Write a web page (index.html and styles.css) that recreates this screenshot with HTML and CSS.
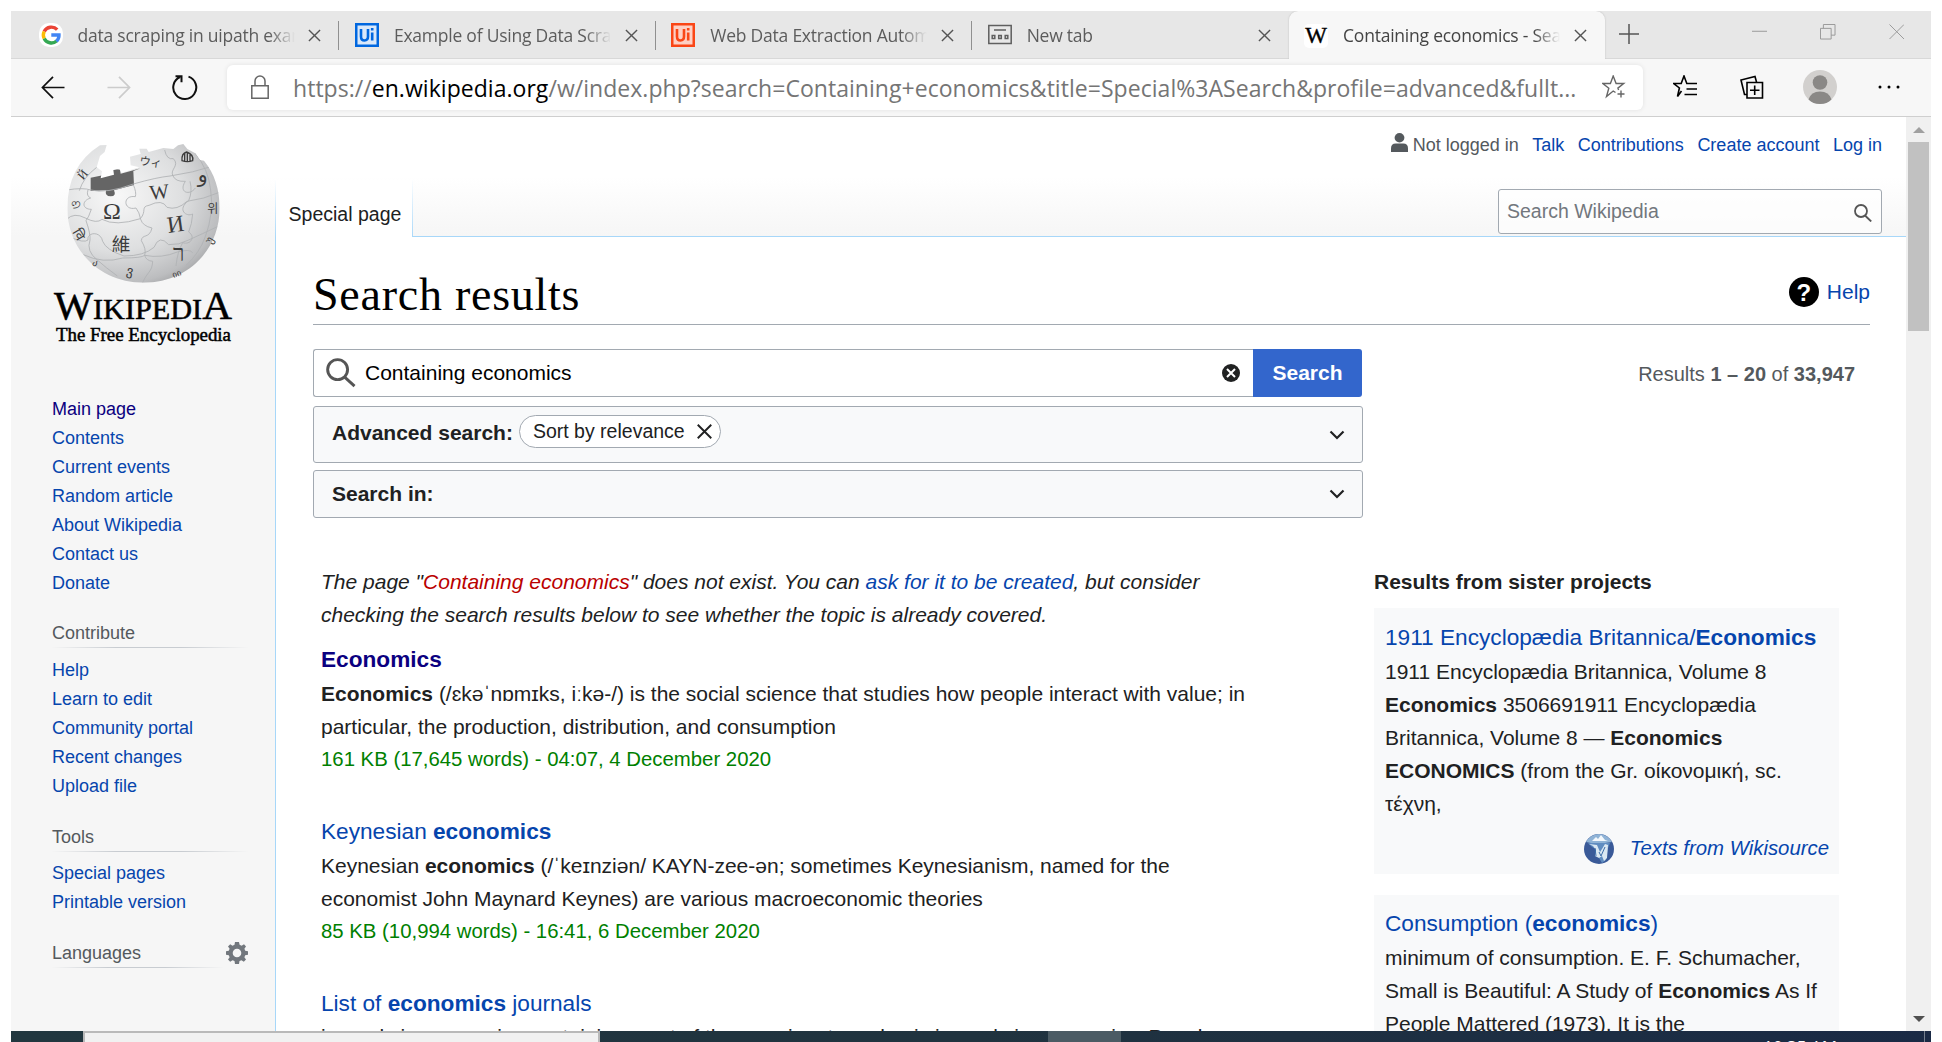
FILE: index.html
```html
<!DOCTYPE html>
<html lang="en">
<head>
<meta charset="utf-8">
<title>Containing economics - Search results - Wikipedia</title>
<link rel="stylesheet" href="styles.css">
</head>
<body>
<div class="window">
  <div class="tabstrip">
    <div class="tab">
      <svg class="fav" viewBox="0 0 24 24"><rect width="24" height="24" rx="10" fill="#fff"/><g fill="none" stroke-width="3.4"><path d="M18.2 6.6A8 8 0 0 0 5.2 8.6" stroke="#ea4335"/><path d="M5.2 8.4a8 8 0 0 0 0 7.2" stroke="#fbbc05"/><path d="M5.2 15.4a8 8 0 0 0 12.4 2.6" stroke="#34a853"/><path d="M12.3 12H20a8 8 0 0 1-2.6 6.2" stroke="#4285f4"/></g></svg>
      <span class="tab-title">data scraping in uipath exam</span>
      <svg class="x" viewBox="0 0 14 14"><path d="M1 1l12 12M13 1L1 13"/></svg>
    </div>
    <div class="tab">
      <svg class="fav" viewBox="0 0 24 24"><rect width="24" height="24" fill="#0067df"/><rect x="2.5" y="2.5" width="19" height="19" fill="#fff" opacity=".85"/><path d="M6 6v7.500q0 4 3.500 4t3.500-4V6M17.200 9.500v8M17.200 5v2.500" fill="none" stroke="#0067df" stroke-width="2.600"/></svg>
      <span class="tab-title">Example of Using Data Scra</span>
      <svg class="x" viewBox="0 0 14 14"><path d="M1 1l12 12M13 1L1 13"/></svg>
    </div>
    <div class="tab">
      <svg class="fav" viewBox="0 0 24 24"><rect width="24" height="24" fill="#fa4616"/><rect x="2.5" y="2.5" width="19" height="19" fill="#fff" opacity=".75"/><path d="M6 6v7.500q0 4 3.500 4t3.500-4V6M17.200 9.500v8M17.200 5v2.500" fill="none" stroke="#fa4616" stroke-width="2.600"/></svg>
      <span class="tab-title">Web Data Extraction Autom</span>
      <svg class="x" viewBox="0 0 14 14"><path d="M1 1l12 12M13 1L1 13"/></svg>
    </div>
    <div class="tab last">
      <svg class="fav" viewBox="0 0 24 24" fill="none" stroke="#5f5f5f" stroke-width="1.5"><path d="M.8 2.500h22.400v18H.8zM6 7h12" /><path d="M4.200 12.500h2.600v3H4.200zM10.700 12.500h2.600v3h-2.600zM17.200 12.500h2.600v3h-2.600z"/></svg>
      <span class="tab-title">New tab</span>
      <svg class="x" viewBox="0 0 14 14"><path d="M1 1l12 12M13 1L1 13"/></svg>
    </div>
    <div class="tab active">
      <span class="fav wfav">W</span>
      <span class="tab-title">Containing economics - Sea</span>
      <svg class="x" viewBox="0 0 14 14"><path d="M1 1l12 12M13 1L1 13"/></svg>
    </div>
    <svg class="plus" viewBox="0 0 20 20"><path d="M10 0v20M0 10h20"/></svg>
    <div class="win-buttons">
      <svg viewBox="0 0 16 16"><path d="M0 7.500h16"/></svg>
      <svg viewBox="0 0 16 16"><path d="M.5 4.500h11v11H.5zM3.500 4.500v-4h12v11h-4"/></svg>
      <svg viewBox="0 0 16 16"><path d="M.5.5l15 15M15.500.5l-15 15"/></svg>
    </div>
  </div>

  <div class="toolbar">
    <svg class="nav" viewBox="0 0 24 24"><path d="M24 12H1M12 1L1 12l11 11"/></svg>
    <svg class="nav off" viewBox="0 0 24 24"><path d="M0 12h23M12 1l11 11-11 11"/></svg>
    <svg class="nav reload" viewBox="0 0 26 26"><path d="M16.500 2.600A11.500 11.500 0 1 1 8 3M3.500 2.200h6v6"/></svg>
    <div class="address">
      <svg class="lock" viewBox="0 0 18 24"><path d="M.8 10.800h16.400v12.400H.8zM4 10.500V6a5 5 0 0 1 10 0v4.500"/></svg>
      <span class="url">https://<b>en.wikipedia.org</b>/w/index.php?search=Containing+economics&amp;title=Special%3ASearch&amp;profile=advanced&amp;fullt...</span>
      <svg class="star" viewBox="0 0 24 24"><path d="M13.500 17.500L11.200 16 4.500 21.500l2.300-8.300L.8 8.500h7.600L11.200 1l2.900 7.500h7.600l-5.800 4.600.7 2M19 15.500v7M15.500 19h7"/></svg>
    </div>
    <svg class="tool" viewBox="0 0 24 24"><path d="M8.500 16L4.500 21.500l1.900-8.500L.8 8.500h7.400L11 1l2.800 7.500H24M13.500 14H24M11.500 19.500H24" /></svg>
    <svg class="tool coll" viewBox="0 0 24 24"><path d="M7 7.500h15.500V23H7zM14.700 10.500v9.500M10 15.200h9.500M7 19.500H4.500L1 5l14-3.500 1.500 5.500"/></svg>
    <svg class="avatar" viewBox="0 0 34 34"><circle cx="17" cy="17" r="17" fill="#d2d0ce"/><circle cx="17" cy="12.500" r="7.300" fill="#8a8886"/><path d="M5.500 29.500Q8 21.500 17 21.500t11.500 8Q24 34 17 34T5.500 29.500z" fill="#8a8886"/></svg>
    <svg class="dots" viewBox="0 0 22 4"><circle cx="2" cy="2" r="1.500"/><circle cx="11" cy="2" r="1.500"/><circle cx="20" cy="2" r="1.500"/></svg>
  </div>

  <div class="viewport">
    <aside class="sidebar">
      <svg class="logo" viewBox="0 0 570 660">
        <defs>
          <radialGradient id="globe" cx=".35" cy=".42" r=".7"><stop offset="0" stop-color="#f8f8f8"/><stop offset=".5" stop-color="#dedfe0"/><stop offset=".8" stop-color="#bcbdbf"/><stop offset="1" stop-color="#88898b"/></radialGradient>
          <clipPath id="ball"><path d="M170 45L150 46Q52 108 52 235C52 360 150 458 281 458S509 360 509 235C509 180 494 130 462 92L450 90 436 70 412 57 400 42 384 46 370 57 340 54 296 66 290 56 268 56 272 72 240 80 242 106 268 112 215 128 208 116 190 120 192 134 152 145 156 124 140 112 150 78 164 66z"/></clipPath>
        </defs>
        <g clip-path="url(#ball)">
          <rect width="570" height="470" fill="url(#globe)"/>
          <path d="M122 143l58-12q8-18 30-12l2 12 60-16-22 8 2 42-60 16q8 18-10 18t-14-18l-46 2z" fill="#656565"/>
          <g fill="none" stroke="#b0b2b5" stroke-width="2.600">
            <path d="M50 180q50-8 72 0 46 12 128-18 70-20 110-24 70-10 130-30"/>
            <path d="M50 268q22-22 56-4t50 4q40 22 115-2c20-22 0-36 26-40q40-20 54 6 30 10 60-18 50-6 100-28"/>
            <path d="M62 322q40 18 52 8c-4-24 38-28 44 4q10 26 64 44 60 0 90-26 16-40 44-8 30 2 60-14 40-18 86-40"/>
            <path d="M100 374q60 28 118 10 58 0 66-8 50 10 98-10 38-10 46 2"/>
            <path d="M114 180q-6 18 8 24c-28 8-26 34 2 34q-8 24-16 34 14 40 12 58-12 34 22 60 24 22 60 48"/>
            <path d="M250 164q10 24 6 36c-40-6-36 44 2 34q10 12 14 34 6 20 34 26c-8 34-30 16-32 38q16 26 10 44 4 16 24 18c-2 34-16 30-30 64"/>
            <path d="M344 60q6 30 26 26c20 20-10 32-2 50q8 20 38 18c-22 34 14 44 30 20M420 154q8 30-4 58c-36 26-8 50 12 40q-2 30-12 54c22 14 6 40-18 32q-16 28-20 70"/>
            <path d="M140 112q-40 30-52 70M436 70q40 50 46 110 10 70-16 140-18 50-58 86"/>
          </g>
        </g>
        <g class="glyphs" text-anchor="middle">
          <text x="186" y="266" font-size="72">Ω</text>
          <text x="328" y="206" font-size="62" transform="rotate(-6 328 190)">W</text>
          <text x="377" y="306" font-size="70" transform="rotate(-8 377 285)">И</text>
          <text x="213" y="362" font-size="56" class="cjk">維</text>
          <text x="302" y="108" font-size="34" class="cjk" transform="rotate(8 302 96)">ウィ</text>
          <text x="386" y="394" font-size="70">ר</text>
          <text x="458" y="156" font-size="62">و</text>
          <text x="488" y="250" font-size="36" class="cjk">위</text>
          <text x="98" y="146" font-size="36" transform="rotate(-50 98 134)">Й</text>
          <text x="78" y="234" font-size="38" transform="rotate(-80 78 222)">ও</text>
          <text x="84" y="326" font-size="40" transform="rotate(60 84 314)">वि</text>
          <text x="240" y="436" font-size="40" transform="rotate(12 240 422)">ვ</text>
          <text x="478" y="342" font-size="34" transform="rotate(-60 478 330)">უ</text>
          <text x="138" y="410" font-size="30" transform="rotate(40 138 398)">ა</text>
          <text x="380" y="440" font-size="26" transform="rotate(-20 380 430)">იი</text>
        </g>
        <path d="M396 92q-2-22 14-26 22 8 18 26-16 6-32 0zM404 70v24M412 68v26M420 74v20" fill="none" stroke="#3c3c3c" stroke-width="4"/>
        <g class="word">
          <text x="12" y="567" textLength="534" lengthAdjust="spacingAndGlyphs"><tspan font-size="120">W</tspan><tspan font-size="88">IKIPEDI</tspan><tspan font-size="120">A</tspan></text>
          <text x="18" y="632" font-size="56" textLength="525" lengthAdjust="spacingAndGlyphs">The Free Encyclopedia</text>
        </g>
      </svg>
      <ul class="links first"><li class="visited">Main page</li><li>Contents</li><li>Current events</li><li>Random article</li><li>About Wikipedia</li><li>Contact us</li><li>Donate</li></ul>
      <h3>Contribute</h3>
      <ul class="links"><li>Help</li><li>Learn to edit</li><li>Community portal</li><li>Recent changes</li><li>Upload file</li></ul>
      <h3>Tools</h3>
      <ul class="links"><li>Special pages</li><li>Printable version</li></ul>
      <div class="lang"><h3>Languages</h3>
        <svg class="gear" viewBox="0 0 22 22"><path fill="#72777d" fill-rule="evenodd" d="M9 0h4l.6 2.800 2 .9L18 2.200 20 4.500l-1.600 2.300.8 2L22 9.200v3.600l-2.800.5-.8 2L20 17.600l-2.200 2.200-2.300-1.500-2 .8L13 22H9l-.5-2.900-2-.8-2.300 1.500L2 17.600l1.600-2.300-.8-2L0 12.800V9.200l2.800-.4.8-2L2 4.500l2.200-2.300 2.300 1.500 2-.9zM11 6.700a4.300 4.300 0 1 0 0 8.600 4.300 4.300 0 0 0 0-8.600z"/></svg>
      </div>
    </aside>

    <main class="main">
      <header class="head">
        <div class="personal">
          <svg class="user" viewBox="0 0 18 20"><ellipse cx="9" cy="5" rx="5.200" ry="5" fill="#54595d"/><path d="M0 20v-4q0-5 5-5h8q5 0 5 5v4z" fill="#54595d"/></svg>
          <span class="nli">Not logged in</span><a>Talk</a><a>Contributions</a><a>Create account</a><a>Log in</a>
        </div>
        <div class="tabs-row">
          <div class="page-tab">Special page</div>
          <div class="search-mini"><span>Search Wikipedia</span>
            <svg viewBox="0 0 18 18"><circle cx="7" cy="7" r="6"/><path d="M11 11.500l6.200 6"/></svg></div>
        </div>
      </header>
      <div class="content">
        <div class="title-row"><h1>Search results</h1>
          <div class="help"><span class="q">?</span><a>Help</a></div></div>
        <div class="search-row">
          <div class="form">
            <div class="query">
              <div class="input">
                <svg class="mag" viewBox="0 0 31 31"><circle cx="12" cy="12" r="10.300"/><path d="M19 19.500l10.500 9.500"/></svg>
                <span>Containing economics</span>
                <svg class="clear" viewBox="0 0 18 18"><circle cx="9" cy="9" r="9" fill="#202122"/><path d="M5 5l8 8M13 5l-8 8" stroke="#fff" stroke-width="2"/></svg>
              </div>
              <div class="button">Search</div>
            </div>
            <div class="panel adv"><b>Advanced search:</b>
              <span class="chip">Sort by relevance <svg viewBox="0 0 14 14"><path d="M.7.7l12.600 12.600M13.300.7L.7 13.300"/></svg></span>
              <svg class="chev" viewBox="0 0 16 10"><path d="M1.500 1.500L8 8l6.500-6.500"/></svg></div>
            <div class="panel in"><b>Search in:</b>
              <svg class="chev" viewBox="0 0 16 10"><path d="M1.500 1.500L8 8l6.500-6.500"/></svg></div>
          </div>
          <div class="count">Results <b>1 – 20</b> of <b>33,947</b></div>
        </div>
        <div class="columns">
          <div class="results">
            <p class="notice">The page "<span class="red">Containing economics</span>" does not exist. You can <a>ask for it to be created</a>, but consider<br>checking the search results below to see whether the topic is already covered.</p>
            <article><h2 class="visited"><b>Economics</b></h2>
              <p><b>Economics</b> (/ɛkəˈnɒmɪks, iːkə-/) is the social science that studies how people interact with value; in<br>particular, the production, distribution, and consumption</p>
              <div class="meta">161 KB (17,645 words) - 04:07, 4 December 2020</div></article>
            <article><h2>Keynesian <b>economics</b></h2>
              <p>Keynesian <b>economics</b> (/ˈkeɪnziən/ KAYN-zee-ən; sometimes Keynesianism, named for the<br>economist John Maynard Keynes) are various macroeconomic theories</p>
              <div class="meta">85 KB (10,994 words) - 16:41, 6 December 2020</div></article>
            <article><h2>List of <b>economics</b> journals</h2>
              <p>journals in economics containing most of the prominent academic journals in economics. Popular</p></article>
          </div>
          <div class="sister">
            <h4>Results from sister projects</h4>
            <section><h2>1911 Encyclopædia Britannica/<b>Economics</b></h2>
              <p>1911 Encyclopædia Britannica, Volume 8<br><b>Economics</b> 3506691911 Encyclopædia<br>Britannica, Volume 8 — <b>Economics</b><br><b>ECONOMICS</b> (from the Gr. οίκονομική, sc.<br>τέχνη,</p>
              <div class="source"><svg viewBox="0 0 30 30"><circle cx="15" cy="15" r="15" fill="#3a5a98"/><path d="M2 8Q7 0 15 0t13 8l-7 1H7z" fill="#8fb3d6"/><path d="M8 7l4-4 2 2 3-4 4 5 3 1z" fill="#f3f8fc"/><path d="M4 9h22l-2 5-2 12-4 3-3-5-2-8-5-3z" fill="#5f8cc0"/><path d="M5 10l8 1 3 7 2-3 3-5 3 1-1 13-3 3-2-5-3 2-4-2 1-6-3-4z" fill="#dbe8f2"/><path d="M15 18l2 4 4-9M11 14l1 8" stroke="#3a6ca8" fill="none"/></svg><a>Texts from Wikisource</a></div></section>
            <section class="second"><h2>Consumption (<b>economics</b>)</h2>
              <p>minimum of consumption. E. F. Schumacher,<br>Small is Beautiful: A Study of <b>Economics</b> As If<br>People Mattered (1973). It is the</p></section>
          </div>
        </div>
      </div>
    </main>
    <div class="scrollbar"><span class="up"></span><span class="thumb"></span><span class="down"></span></div>
  </div>

  <div class="taskbar"><span class="start"></span><span class="searchbox"></span><span class="apps"></span><span class="running"></span><span class="tray"><span class="clock">10:35 AM</span></span><span class="desk"></span></div>
</div>
</body>
</html>
```
FILE: styles.css
```css
* { box-sizing: border-box; }
body { margin: 0; background: #fff; width: 1942px; height: 1042px; overflow: hidden; font-family: "Liberation Sans", Arial, sans-serif; font-size: 21px; color: #202122; }
ul, h1, h2, h3, h4, p { margin: 0; padding: 0; list-style: none; font-weight: normal; font-size: inherit; }
svg { display: block; flex: none; }
a { color: #0645ad; }
.window { margin: 11px 11px 0; width: 1920px; height: 1031px; display: flex; flex-direction: column; }

/* browser chrome */
.tabstrip { height: 48px; background: #e7e7e7; border-bottom: 1px solid #d8d8d8; display: flex; padding-left: 12px; font-family: "Open Sans", "Segoe UI", sans-serif; flex: none; }
.tab { width: 316.400px; height: 47px; display: flex; align-items: center; padding: 1px 18px 0 15.500px; position: relative; }
.tab::after { content: ""; position: absolute; right: 0; top: 10px; width: 1px; height: 29px; background: #909090; }
.tab.last::after, .tab.active::after { display: none; }
.tab.active { background: #f7f7f7; border-radius: 9px 9px 0 0; height: 48px; box-shadow: 0 0 2px #bbb; clip-path: inset(0 -4px 0 -4px); }
.fav { width: 24px; height: 24px; flex: none; }
.wfav { background: #fff; border-radius: 5px; font: 23px/24px "Liberation Serif", serif; text-align: center; color: #000; -webkit-text-stroke: .4px #000; }
.tab-title { margin: -1px 0 0 15px; width: 217px; flex: none; white-space: nowrap; overflow: hidden; font-size: 17.500px; letter-spacing: -.23px; line-height: 30px; color: #5c5c5c; -webkit-mask-image: linear-gradient(90deg, #000 88%, transparent 100%); mask-image: linear-gradient(90deg, #000 88%, transparent 100%); }
.active .tab-title { color: #444; }
.x { width: 13px; height: 13px; margin-left: auto; fill: none; stroke: #555; stroke-width: 1.500; }
.plus { width: 20px; height: 20px; margin: 13px 0 0 14px; stroke: #555; stroke-width: 1.500; }
.win-buttons { display: flex; gap: 53px; margin: 13px 27px 0 auto; }
.win-buttons svg { width: 15.500px; height: 15.500px; fill: none; stroke: #999; stroke-width: 1; }
.toolbar { height: 58px; background: #f7f7f7; border-bottom: 1px solid #cfcfcf; display: flex; align-items: center; padding: 0 31px 1px 30px; flex: none; }
.nav { width: 24px; height: 23px; margin-right: 42px; fill: none; stroke: #111; stroke-width: 1.800; }
.nav.off { stroke: #ccc; }
.nav.reload { width: 26px; height: 26px; margin: 0 29px 0 -1px; stroke-width: 2; }
.address { width: 1416px; height: 45px; background: #fff; border-radius: 6px; box-shadow: 0 0 5px rgba(0,0,0,.09); display: flex; align-items: center; padding: 0 17px 0 24px; }
.lock { width: 18px; height: 24px; fill: none; stroke: #666; stroke-width: 1.500; }
.url { margin: 2px 0 0 24px; font: 23px/40px "Open Sans", "Segoe UI", sans-serif; color: #757575; white-space: nowrap; letter-spacing: .04px; }
.url b { font-weight: normal; color: #000; }
.star { width: 24px; height: 24px; margin-left: auto; fill: none; stroke: #666; stroke-width: 1.400; }
.tool { width: 24px; height: 24px; margin-left: 30px; fill: none; stroke: #000; stroke-width: 1.600; }
.coll { margin-left: 43px; }
.avatar { width: 34px; height: 34px; margin-left: 39px; }
.dots { width: 22px; height: 4px; margin-left: auto; }

/* page */
.viewport { height: 914px; display: flex; overflow: hidden; flex: none; background: linear-gradient(#fff 0, #fff 60px, #f6f6f6 119px, #f6f6f6 100%); }
.sidebar { width: 264px; flex: none; padding: 13px 27px 0 41px; font-size: 18px; }
.logo { width: 190px; height: 220px; margin-left: -2px; }
.glyphs { fill: #3c3c3c; font-family: "Liberation Serif", "DejaVu Sans", serif; }
.cjk { font-family: "Noto Sans CJK TC", sans-serif; }
.word { fill: #000; stroke: #000; stroke-width: 1.500; font-family: "Liberation Serif", serif; }
.links { color: #0645ad; line-height: 29px; margin-top: 7px; }
.links.first { margin-top: 44.500px; }
.visited { color: #0b0080; }
.sidebar h3 { color: #54595d; line-height: 30px; margin-top: 20.800px; height: 30px; border-bottom: 1px solid; border-image: linear-gradient(90deg, #f6f6f6, #c8ccd1 33%, #c8ccd1 66%, #f6f6f6) 1; }
.sidebar h3 + .links { margin-top: 7.500px; }
.lang { display: flex; align-items: flex-end; justify-content: space-between; }
.lang h3 { width: 171px; }
.gear { width: 22px; height: 22px; margin-bottom: 4px; }

.main { width: 1631px; flex: none; display: flex; flex-direction: column; }
.head { height: 119px; flex: none; display: flex; flex-direction: column; justify-content: space-between; }
.personal { display: flex; justify-content: flex-end; font-size: 18px; line-height: 24px; padding: 16px 24px 0 0; }
.personal a { margin-left: 13.500px; }
.user { width: 17px; height: 19px; margin-right: 5px; }
.nli { color: #54595d; }
.tabs-row { height: 56px; display: flex; justify-content: space-between; position: relative; z-index: 1; }
.page-tab { width: 138px; height: 57px; padding: 20px 0 0 12.600px; background: #fff; font-size: 19.500px; line-height: 28px; border: solid; border-width: 0 1.500px; border-image: linear-gradient(#fff, #a7d7f9) 1; }
.search-mini { width: 384px; height: 45px; margin: 9px 24px 0 0; border: 1.500px solid #a2a9b1; border-radius: 3px; background: rgba(255,255,255,.6); display: flex; justify-content: space-between; align-items: center; padding: 0 9px 1px 8px; font-size: 19.500px; color: #72777d; }
.search-mini svg { width: 18px; height: 18px; fill: none; stroke: #555; stroke-width: 1.800; margin-top: 3px; }
.content { flex: 1; background: #fff; border: 1px solid #a7d7f9; border-width: 1px 0 0 1px; padding: 0 36px 0 37px; }
.title-row { height: 88px; border-bottom: 1px solid #a2a9b1; display: flex; justify-content: space-between; }
h1 { font: 46px/60px "Liberation Serif", Georgia, serif; color: #000; padding-top: 28px; letter-spacing: .75px; }
.help { display: flex; align-items: center; height: 30px; margin-top: 40px; }
.q { width: 30px; height: 30px; border-radius: 50%; background: #000; color: #fff; font-weight: bold; font-size: 24px; line-height: 31px; text-align: center; margin-right: 8px; }
.search-row { display: flex; justify-content: space-between; padding-top: 24px; height: 240px; }
.form { width: 1050px; }
.query { display: flex; height: 48px; width: 1049px; }
.input { flex: 1; border: 1px solid #a2a9b1; border-right: 0; border-radius: 3px 0 0 3px; display: flex; align-items: center; padding: 0 13px 0 12px; color: #000; }
.mag { width: 30px; height: 30px; margin-right: 9px; fill: none; stroke: #555; stroke-width: 3; }
.clear { width: 18px; height: 18px; margin-left: auto; }
.button { width: 109px; background: #36c; color: #fff; font-weight: bold; line-height: 48px; text-align: center; border-radius: 0 3px 3px 0; }
.panel { border: 1px solid #a2a9b1; border-radius: 3px; background: #f8f9fa; display: flex; align-items: center; padding: 0 17px 0 18px; }
.adv { height: 57px; margin-top: 9px; padding-bottom: 4px; }
.in { height: 48px; margin-top: 7px; padding-bottom: 1px; }
.chip { height: 33px; border: 1px solid #a2a9b1; border-radius: 17px; margin: 0 0 2px 6px; padding: 0 8px 0 13px; width: 202px; display: flex; align-items: center; justify-content: space-between; font-size: 19.500px; background: #fff; white-space: nowrap; }
.chip svg { width: 15px; height: 15px; stroke: #202122; stroke-width: 1.800; }
.chev { width: 16px; height: 10px; margin-left: auto; fill: none; stroke: #202122; stroke-width: 2.200; }
.adv .chev { margin-top: 4px; }
.count { color: #54595d; font-size: 20px; line-height: 30px; margin: 10px 15px 0 0; }
.columns { display: flex; }
.results { width: 1053px; padding-left: 8px; line-height: 33px; white-space: nowrap; flex: none; }
.notice { font-style: italic; margin-bottom: 9.500px; }
.red { color: #ba0000; }
h2 { font-size: 22.650px; line-height: 36px; color: #0645ad; }
h2.visited { color: #0b0080; }
article { margin-bottom: 38px; }
article:last-child p { margin-top: -1px; }
.meta { color: green; line-height: 32px; font-size: 20.350px; }
.sister { width: 465px; margin-left: 8px; line-height: 33px; white-space: nowrap; flex: none; }
h4 { font-weight: bold; height: 43px; }
section { background: #f8f9fa; height: 266px; padding: 11px 11px 10px; margin-bottom: 21px; }
.second { padding-top: 10px; }
.source { display: flex; justify-content: flex-end; align-items: center; margin: 12px -1px 0 0; font-style: italic; font-size: 20.350px; gap: 16px; }
.source svg { width: 30px; height: 30px; }
.scrollbar { width: 25px; background: #f0f0f0; display: flex; flex-direction: column; align-items: center; padding: 10px 0 9px; }
.up { border: 6px solid transparent; border-top: 0; border-bottom-color: #a0a0a0; }
.thumb { width: 21px; height: 189px; margin-top: 9px; background: #c1c1c1; }
.down { margin-top: auto; border: 6px solid transparent; border-bottom: 0; border-top-color: #505050; }

.taskbar { height: 11px; flex: none; overflow: hidden; display: flex; background: linear-gradient(90deg, #21373f, #20333f 50%, #1a2a45); }
.start { width: 72px; }
.searchbox { width: 517px; background: #f1f1f1; border: 2px solid #b9b9b9; border-bottom: 0; }
.apps { width: 448px; }
.running { width: 73px; background: #4b5b64; }
.tray { flex: 1; text-align: right; padding: 7px 87px 0 0; }
.clock { display: block; color: #fff; font: 17px/17px "Open Sans", sans-serif; }
.desk { width: 7px; border-left: 1px solid #76808e; }
```
